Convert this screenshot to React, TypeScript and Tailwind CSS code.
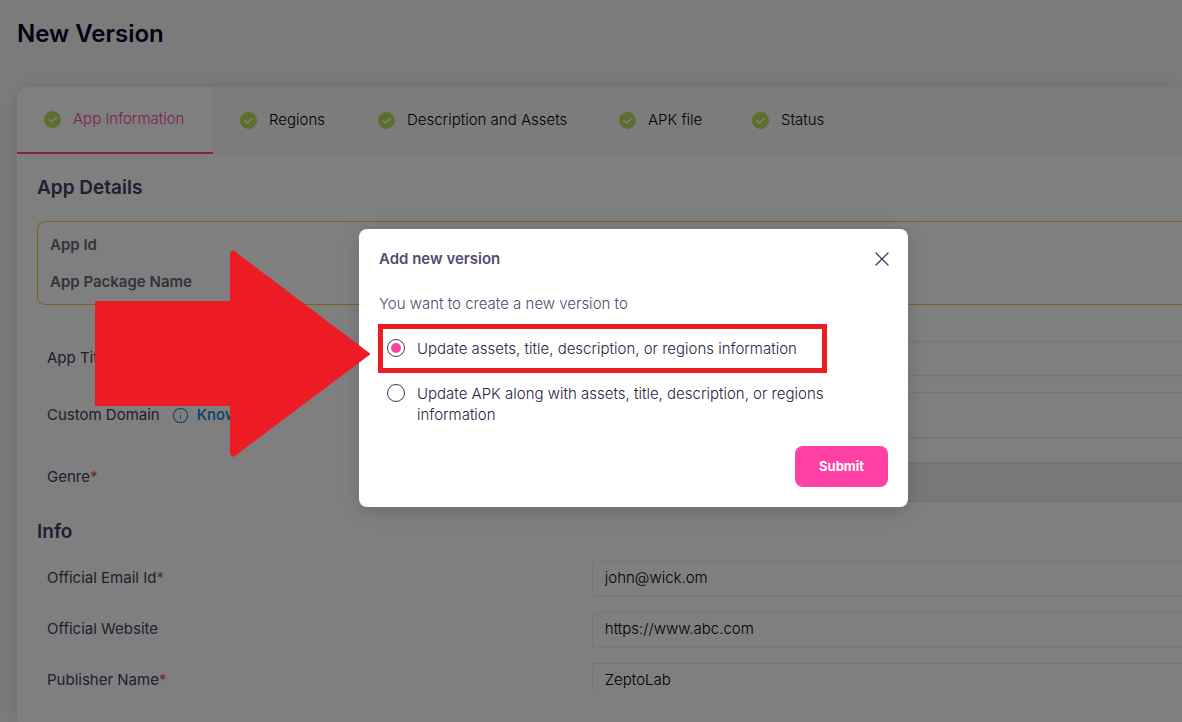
import { useState } from "react";
import { Info, X } from "lucide-react";

const tabs = [
  { label: "App Information", width: "w-[196px]" },
  { label: "Regions", width: "w-[138px]" },
  { label: "Description and Assets", width: "w-[241px]" },
  { label: "APK file", width: "w-[133px]" },
  { label: "Status", width: "w-[133px]" },
];

const infoFields = [
  { id: "email", label: "Official Email Id", required: true, value: "john@wick.om" },
  { id: "website", label: "Official Website", required: false, value: "https://www.abc.com" },
  { id: "publisher", label: "Publisher Name", required: true, value: "ZeptoLab" },
];

const versionOptions = [
  { id: "assets", label: "Update assets, title, description, or regions information" },
  { id: "apk", label: "Update APK along with assets, title, description, or regions information" },
];

const inputCls =
  "min-w-0 flex-1 rounded-l border border-r-0 border-[#eaeaec] bg-white px-3 font-light text-black shadow-xs";
const labelCls = "flex h-[35px] items-center";
const headingCls = "text-[19px] leading-7 font-semibold text-[#463c60]";

export default function App() {
  const [open, setOpen] = useState(true);

  return (
    <div className="relative flex h-screen flex-col overflow-hidden bg-[#f6f6f6] font-['Inter','Open_Sans',sans-serif] text-[15px]">
      <header className="h-[87px] shrink-0 px-[17px] pt-[18px]">
        <h1 className="text-2xl leading-8 font-semibold text-[#0c0228]">New Version</h1>
      </header>

      <main className="ml-[17px] flex min-h-0 flex-1 flex-col rounded-tl-xl bg-white pb-[31px] shadow-[0_0_20px_rgba(0,0,0,0.1)]">
        <Tabs />
        <div className="min-h-0 flex-1 overflow-hidden pt-5 pl-5">
          <h2 className={headingCls}>App Details</h2>
          <dl className="mt-[19px] rounded-l-lg border border-r-0 border-[#ffc72c] py-1 pl-3 font-semibold text-[#6b647c]">
            <dt className="leading-[37px]">App Id</dt>
            <dt className="leading-[37px]">App Package Name</dt>
          </dl>

          <div className="mt-9 pl-[10px] text-[#463c60]">
            <div className="flex">
              <Label id="title" text="App Title" required />
              <input id="title" className={inputCls} />
            </div>
            <div className="mt-4 flex h-[46px] items-stretch">
              <div className="flex w-[48%] items-center gap-3">
                <label htmlFor="domain">Custom Domain</label>
                <a href="#domain-help" className="flex items-center gap-2 font-medium text-[#0b84d8]">
                  <Info size={17} strokeWidth={1.5} />
                  Know More
                </a>
              </div>
              <input id="domain" className={inputCls} />
            </div>
            <div className="mt-[22px] flex items-start">
              <Label id="genre" text="Genre" required />
              <div className="flex min-w-0 flex-1 py-[2px]">
                <select
                  id="genre"
                  disabled
                  className="h-10 w-full appearance-none rounded-l border-2 border-r-0 border-[#e6e6e6] bg-[#f0f0f0] px-3"
                />
              </div>
            </div>
          </div>

          <h2 className={headingCls + " mt-[14px]"}>Info</h2>
          <div className="mt-[15px] space-y-4 pl-[10px] text-[#463c60]">
            {infoFields.map((f) => (
              <div key={f.id} className="flex">
                <Label id={f.id} text={f.label} required={f.required} />
                <input id={f.id} defaultValue={f.value} className={inputCls} />
              </div>
            ))}
          </div>
        </div>
      </main>

      {open && <VersionDialog onClose={() => setOpen(false)} />}
    </div>
  );
}

function Tabs() {
  return (
    <nav className="flex h-[67px] shrink-0 rounded-tl-xl bg-[#f8f8f8]" role="tablist">
      {tabs.map((t, i) => (
        <button
          key={t.label}
          role="tab"
          aria-selected={i === 0}
          className={
            "flex shrink-0 items-center gap-3 pl-[27px] font-light whitespace-nowrap " +
            t.width +
            (i === 0
              ? " rounded-tl-xl border-b-2 border-[#ff40a5] bg-white text-[#ff40a5]"
              : " text-black")
          }
        >
          <CheckCircle />
          {t.label}
        </button>
      ))}
    </nav>
  );
}

function CheckCircle() {
  return (
    <svg width="17" height="17" viewBox="0 0 17 17" fill="none" className="shrink-0">
      <circle cx="8.5" cy="8.5" r="8.5" fill="#b9df5c" />
      <path
        d="M4.9 8.6l2.5 2.5 4.8-4.7"
        stroke="#fff"
        strokeWidth="1.4"
        strokeLinecap="round"
        strokeLinejoin="round"
      />
    </svg>
  );
}

function Label({ id, text, required }: { id: string; text: string; required?: boolean }) {
  return (
    <div className="w-[48%] shrink-0">
      <label htmlFor={id} className={labelCls}>
        {text}
        {required && <span className="text-[#d9532c]">*</span>}
      </label>
    </div>
  );
}

function VersionDialog({ onClose }: { onClose: () => void }) {
  const [choice, setChoice] = useState("assets");

  return (
    <div className="absolute inset-0 flex items-start justify-center bg-black/50 pt-[229px] pl-[85px]">
      <div
        role="dialog"
        aria-labelledby="dialog-title"
        className="relative w-full max-w-[549px] rounded-lg bg-white p-5 shadow-[0_4px_20px_rgba(0,0,0,0.15)]"
      >
        <div className="flex items-center justify-between">
          <h3 id="dialog-title" className="leading-5 font-semibold text-[#544a70]">
            Add new version
          </h3>
          <button onClick={onClose} aria-label="Close" className="-m-1.5 text-[#40365c]">
            <X size={24} strokeWidth={1.25} />
          </button>
        </div>
        <p className="mt-[25px] leading-5 font-light text-[#544a70]">You want to create a new version to</p>

        <div className="mt-6 mr-[61px] space-y-6">
          {versionOptions.map((o, i) => (
            <label
              key={o.id}
              className="relative flex items-start gap-3 pl-2 leading-[21px] font-light text-[#2c2245]"
            >
              <input
                type="radio"
                name="version"
                checked={choice === o.id}
                onChange={() => setChoice(o.id)}
                className="mt-px grid size-[18px] shrink-0 appearance-none place-content-center rounded-full border border-[#40365c] before:size-[10px] before:rounded-full checked:before:bg-[#ff40a5]"
              />
              {o.label}
              {i === 0 && (
                <span className="pointer-events-none absolute -inset-y-[14px] right-0 -left-px border-[5px] border-[#ed1c24]" />
              )}
            </label>
          ))}
        </div>

        <div className="mt-[21px] flex justify-end">
          <button
            onClick={onClose}
            className="h-[41px] rounded-lg bg-[#ff40a5] px-6 text-[13px] font-bold text-white"
          >
            Submit
          </button>
        </div>

        <svg
          width="276"
          height="207"
          viewBox="0 0 276 207"
          className="pointer-events-none absolute top-[21px] -left-[265px]"
        >
          <path
            d="M1.5 51.5H136.500V2l3-1 136.500 103-136.500 102.500-3-2v-49H1.500z"
            fill="#ed1c24"
            stroke="#ed1c24"
            strokeWidth="1"
            strokeLinejoin="round"
          />
        </svg>
      </div>
    </div>
  );
}
